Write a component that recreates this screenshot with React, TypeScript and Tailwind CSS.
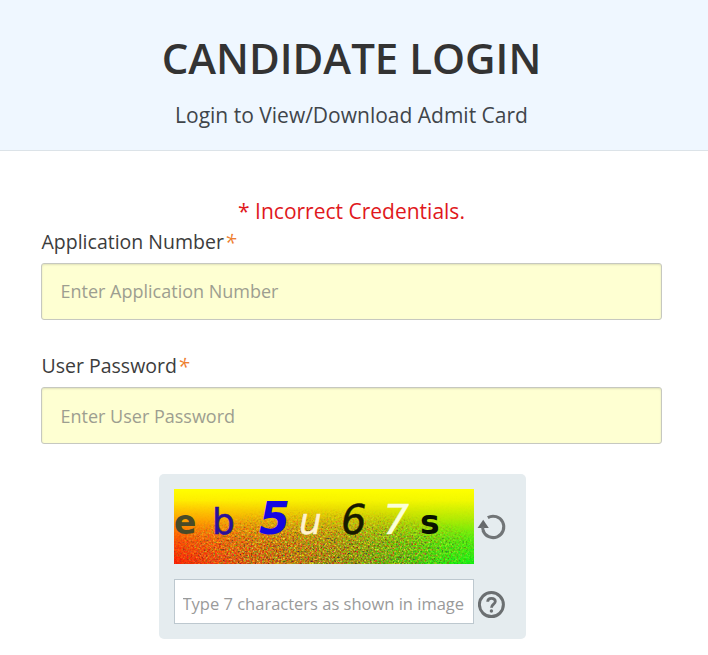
import React from "react";

type FieldProps = { id: string; label: string; placeholder: string; type: string; inputClass: string };

function Field({ id, label, placeholder, type, inputClass }: FieldProps) {
  return (
    <div className="flex flex-col">
      <label htmlFor={id} className="flex h-[26px] items-center gap-[0.5px] pl-[0.5px] text-[19.5px] leading-[26px] text-[#3c3c3c]">
        <span className="whitespace-nowrap">{label}</span>
        <span className="text-[21px] font-medium italic text-[#ee8030]">*</span>
      </label>
      <input
        id={id}
        type={type}
        placeholder={placeholder}
        className={`mt-[8px] h-[57px] w-[621px] rounded-[3px] border border-[#c6c8c0] bg-[#feffd2] px-[18.5px] text-[18px] shadow-[inset_0_1px_2px_rgba(0,0,0,0.12)] outline-none placeholder:text-[#9d9e90] ${inputClass}`}
      />
    </div>
  );
}

function Captcha() {
  return (
    <svg width="300" height="75" viewBox="0 0 300 75" className="block">
      <defs>
        <linearGradient id="base" x1="0" x2="1" y1="0" y2="0">
          <stop offset="0" stopColor="#ff1400" />
          <stop offset="0.14" stopColor="#fa2d00" />
          <stop offset="0.35" stopColor="#c45800" />
          <stop offset="0.55" stopColor="#8a8500" />
          <stop offset="0.76" stopColor="#38c800" />
          <stop offset="0.9" stopColor="#10f408" />
          <stop offset="1" stopColor="#08fa10" />
        </linearGradient>
        <linearGradient id="top" x1="0" x2="0" y1="0" y2="1">
          <stop offset="0" stopColor="#ffff00" />
          <stop offset="0.15" stopColor="#fffa00" stopOpacity="0.95" />
          <stop offset="0.4" stopColor="#ffe800" stopOpacity="0.68" />
          <stop offset="0.7" stopColor="#ffe000" stopOpacity="0.25" />
          <stop offset="1" stopColor="#ffe000" stopOpacity="0" />
        </linearGradient>
        <radialGradient id="spread" cx="0.5" cy="0.8" r="0.55">
          <stop offset="0" stopColor="#ddd" />
          <stop offset="0.55" stopColor="#bbb" />
          <stop offset="0.85" stopColor="#666" />
          <stop offset="1" stopColor="#111" />
        </radialGradient>
        <linearGradient id="fall" x1="0" x2="0" y1="0" y2="1">
          <stop offset="0.05" stopColor="#000" />
          <stop offset="0.25" stopColor="#000" stopOpacity="0.65" />
          <stop offset="0.6" stopColor="#000" stopOpacity="0.2" />
          <stop offset="1" stopColor="#000" stopOpacity="0" />
        </linearGradient>
        <mask id="grainMask">
          <rect width="300" height="75" fill="url(#spread)" />
          <rect width="300" height="75" fill="url(#fall)" />
        </mask>
        <filter id="grain" x="0" y="0" width="100%" height="100%" colorInterpolationFilters="sRGB">
          <feTurbulence type="fractalNoise" baseFrequency="0.53" numOctaves="3" seed="12" />
          <feColorMatrix values="2.4 0 0 0 -0.48  0 2.4 0 0 -0.62  0 0 0.8 0 -0.2  0 0 0 1.8 -0.3" />
        </filter>
      </defs>
      <rect width="300" height="75" fill="url(#base)" />
      <rect width="300" height="75" fill="url(#top)" />
      <g mask="url(#grainMask)">
        <rect width="300" height="75" filter="url(#grain)" />
      </g>
      <g className="font-['DejaVu_Sans',sans-serif]">
        <text x="0" y="45" fontSize="33" fontWeight="700" fill="#494a28">e</text>
        <text x="38" y="45" fontSize="36" fill="#2a109c" stroke="#2a109c" strokeWidth="0.5">b</text>
        <text x="85" y="45" fontSize="44.5" fontWeight="700" fontStyle="italic" fill="#1508e0">5</text>
        <text x="125" y="45" fontSize="36" fontStyle="italic" fill="#fff2cf" stroke="#fff2cf" strokeWidth="0.4">u</text>
        <text x="167" y="45" fontSize="40" fontStyle="italic" fill="#171a00" stroke="#171a00" strokeWidth="0.4">6</text>
        <text x="209" y="45" fontSize="41" fontStyle="italic" fill="#fbffd8" stroke="#fbffd8" strokeWidth="0.4">7</text>
        <text x="246" y="45" fontSize="33" fontWeight="700" fill="#081200">s</text>
      </g>
    </svg>
  );
}

function RefreshIcon() {
  return (
    <svg width="28" height="28" viewBox="0 0 28 28" fill="none" className="block overflow-visible">
      <path d="M9.8 4.6A10.7 10.7 0 1 1 5 17.4" stroke="#717577" strokeWidth="3" />
      <path d="M-0.4 15L5.2 6.8L10.8 15Z" fill="#66696b" />
      <path d="M4.6 13.6c0 1.6 0.2 3 0.9 4.8" stroke="#717577" strokeWidth="3" />
    </svg>
  );
}

function HelpIcon() {
  return (
    <svg width="28" height="28" viewBox="0 0 28 28" fill="none" className="block">
      <circle cx="13.4" cy="13.6" r="12" stroke="#6b6f71" strokeWidth="3" />
      <path d="M9.7 10.8C9.7 8.5 11.3 7.4 13.4 7.4C15.7 7.4 17.3 8.6 17.3 10.5C17.3 13.1 13.5 13.3 13.5 16.7" stroke="#6b6f71" strokeWidth="2.8" />
      <circle cx="13.4" cy="20" r="1.7" fill="#6b6f71" />
    </svg>
  );
}

export default function App() {
  return (
    <div className="h-[655px] w-[708px] overflow-hidden bg-white font-['Open_Sans','Noto_Sans',sans-serif] text-[#333]">
      <header className="flex h-[151px] flex-col items-center border-b border-[#dce3e8] bg-[#eff7ff] pr-[5px] pt-[29px]">
        <h1 className="h-[58px] whitespace-nowrap text-[42px] font-semibold leading-[58px]">CANDIDATE LOGIN</h1>
        <p className="mt-[13px] h-[30px] whitespace-nowrap text-[21px] leading-[30px] text-[#40454a]">Login to View/Download Admit Card</p>
      </header>
      <main className="flex flex-col pl-[41px] pt-[45px]">
        <p className="h-[30px] w-[621px] whitespace-nowrap text-center text-[21px] leading-[30px] text-[#e01820]">* Incorrect Credentials.</p>
        <div className="mt-[3px] flex flex-col gap-[33px]">
          <Field id="application" type="text" label="Application Number" placeholder="Enter Application Number" inputClass="pb-[2px]" />
          <Field id="password" type="password" label="User Password" placeholder="Enter User Password" inputClass="pb-0" />
        </div>
        <section className="ml-[118px] mt-[30px] flex h-[165px] w-[367px] flex-col gap-[15px] rounded-[5px] bg-[#e5ecef] pl-[15px] pt-[15px]">
          <div className="flex h-[75px] items-center gap-[4px]">
            <Captcha />
            <RefreshIcon />
          </div>
          <div className="flex h-[45px] items-center gap-[4px]">
            <input
              type="text"
              placeholder="Type 7 characters as shown in image"
              className="h-[45px] w-[300px] border border-[#bdc8cf] bg-white px-[7.5px] pt-[4px] text-[16.5px] outline-none placeholder:text-[#9a9a9a]"
            />
            <div className="pt-[7px]">
              <HelpIcon />
            </div>
          </div>
        </section>
      </main>
    </div>
  );
}
